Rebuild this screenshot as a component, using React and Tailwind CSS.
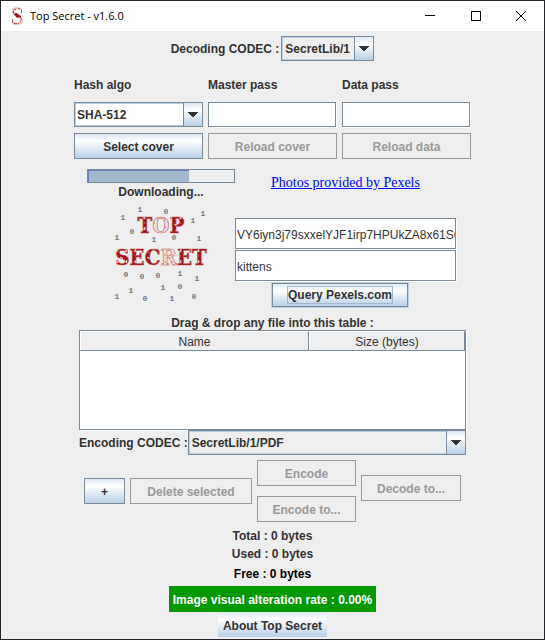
import React from 'react';

const metal = 'border border-[#7a8a99] bg-linear-to-b from-[#dde8f3] via-white via-30% to-[#b8cfe5]';

function Combo({ id, value, className, white }) {
  return (
    <div className={`relative h-[25px] border border-[#7a8a99] ${className}`}>
      <select
        id={id}
        defaultValue={value}
        className={`block h-full w-full appearance-none border border-[#b8cfe5] pr-5 font-bold text-[#333333] outline-none ${
          white ? 'bg-white pl-px' : 'bg-[#eeeeee] pl-0.5'
        }`}
      >
        <option>{value}</option>
      </select>
      <span className="pointer-events-none absolute inset-y-0 right-0 flex w-[19px] items-center justify-center border-l border-[#7a8a99] bg-linear-to-b from-[#dde8f3] via-white via-30% to-[#b8cfe5]">
        <svg width="10" height="5" viewBox="0 0 10 5" fill="#333333" shapeRendering="crispEdges" aria-hidden="true">
          <path d="M0 0h10v1H9v1H8v1H7v1H6v1H4V4H3V3H2V2H1V1H0z" />
        </svg>
      </span>
    </div>
  );
}

function Button({ children, disabled, className = '' }) {
  return (
    <button
      type="button"
      disabled={disabled}
      className={`h-[26px] pt-0.5 font-bold whitespace-nowrap ${
        disabled ? 'border border-[#999999] bg-[#eeeeee] text-[#999999]' : `${metal} text-[#333333]`
      } ${className}`}
    >
      {children}
    </button>
  );
}

const field =
  'block w-full border border-[#7a8a99] bg-white pl-px pt-0.5 text-[#333333] outline-none shadow-[1px_1px_0_#ffffff]';

const digits = [
  ['1', 22, 18], ['1', 39, 10], ['0', 65, 12], ['1', 102, 14], ['1', 92, 21], ['0', 31, 32],
  ['1', 16, 38], ['1', 53, 40], ['0', 73, 38], ['1', 98, 39], ['0', 25, 75], ['0', 41, 77],
  ['0', 57, 76], ['1', 79, 74], ['1', 96, 79], ['1', 30, 91], ['1', 62, 88], ['0', 79, 87],
  ['1', 16, 97], ['0', 44, 99], ['1', 71, 99], ['0', 93, 97],
];

function Logo() {
  return (
    <svg width="120" height="104" viewBox="0 0 120 104" role="img" aria-label="Top Secret">
      <defs>
        <pattern id="worn" width="9" height="11" patternUnits="userSpaceOnUse">
          <rect width="9" height="11" fill="#a31515" />
          <path d="M1 2l3 1-1 1zM6 7l2-2v3zM2 8l1 1M7 1h1" stroke="#e6c4c4" strokeWidth=".7" fill="#eeeeee" />
        </pattern>
        <pattern id="hollow" width="7" height="7" patternUnits="userSpaceOnUse">
          <rect width="7" height="7" fill="#eedcdc" />
          <path d="M0 5l2 2M3 1l2 2" stroke="#c66060" strokeWidth=".7" />
        </pattern>
      </defs>
      <g fontFamily="'DejaVu Serif Condensed', 'Liberation Serif', serif" fontWeight="700" fontSize="22" textAnchor="middle" fill="url(#worn)" stroke="#b94444" strokeWidth=".5">
        <text x="60" y="33">T<tspan fill="url(#hollow)">O</tspan>P</text>
        <text x="60" y="65">SEC<tspan fill="url(#hollow)">R</tspan>ET</text>
      </g>
      <g fontFamily="'Liberation Mono', monospace" fontWeight="700" fontSize="8" textAnchor="middle" fill="#777777">
        {digits.map(([d, x, y], i) => (
          <text key={i} x={x} y={y + 2}>{d}</text>
        ))}
      </g>
    </svg>
  );
}

export default function App() {
  return (
    <div className="flex min-h-screen flex-col border border-[#25232b] bg-[#eeeeee] font-['Liberation_Sans',Arial,sans-serif] text-xs leading-4 font-bold text-[#333333]">
      <header className="flex h-[30px] items-center bg-white pl-2 text-black">
        <svg width="16" height="18" viewBox="0 0 16 18" fill="none" aria-hidden="true">
          <path d="M11.500 2.500C9 .5 4 1 4 4.500c0 3 3 3.500 5 5 2 1 3.500 2 3.500 4 0 3.500-5 4-8.500 2.500" stroke="#e8c0c0" strokeWidth="2.500" />
          <path d="M5 2h2M9 1h2M12 2v4M4 4v3M6 6h1M3 12v4M5 16h3M11 14h1M12 11v2M9 16h1" stroke="#bd5555" strokeWidth="1" shapeRendering="crispEdges" />
          <path d="M5 7l3-1 2 2 2 1v2l-2-1-2 1z" fill="#9a1010" />
        </svg>
        <h1 className="ml-[5px] flex-1 font-['Open_Sans',sans-serif] text-[11px] font-normal">Top Secret - v1.6.0</h1>
        <button type="button" aria-label="Minimize" className="flex h-full w-[46px] items-center justify-center">
          <svg width="10" height="10" stroke="#000000" shapeRendering="crispEdges"><path d="M0 4.500h10" /></svg>
        </button>
        <button type="button" aria-label="Maximize" className="flex h-full w-[45px] items-center justify-center">
          <svg width="10" height="10" fill="none" stroke="#000000" shapeRendering="crispEdges"><path d="M.5.5h9v9h-9z" /></svg>
        </button>
        <button type="button" aria-label="Close" className="flex h-full w-[46px] items-center justify-center">
          <svg width="10" height="10" stroke="#000000"><path d="M0 0l10 10M10 0L0 10" /></svg>
        </button>
      </header>

      <main className="flex flex-col items-center">
        <div className="mt-[5px] flex items-center gap-0.5">
          <label htmlFor="decoding">Decoding CODEC :</label>
          <Combo id="decoding" value="SecretLib/1" className="w-[93px]" />
        </div>

        <div className="mt-4 grid w-[397px] max-w-full grid-cols-3 gap-x-[5px] gap-y-1.5">
          <label htmlFor="hash" className="mb-[3px]">Hash algo</label>
          <label htmlFor="master">Master pass</label>
          <label htmlFor="data">Data pass</label>
          <Combo id="hash" value="SHA-512" white className="w-full" />
          <div className="pr-px"><input id="master" type="password" className={`${field} h-[25px]`} /></div>
          <div className="pr-px"><input id="data" type="password" className={`${field} h-[25px]`} /></div>
          <Button>Select cover</Button>
          <Button disabled>Reload cover</Button>
          <Button disabled>Reload data</Button>
        </div>

        <div className="mt-2.5 flex w-[371px] max-w-full">
          <div className="flex w-[148px] flex-col items-center">
            <div role="progressbar" aria-label="Downloading" aria-valuenow="69" className="h-3.5 w-full border border-[#7a8a99]">
              <div className="h-full w-[69%] border-t border-l border-[#6382bf] bg-[#a3b8cc]" />
            </div>
            <p className="mt-px">Downloading...</p>
            <Logo />
          </div>
          <div className="flex-1 pt-1">
            <a href="#pexels" className="ml-9 block w-fit font-['Liberation_Serif',serif] text-sm leading-5 font-normal text-[#0000ff] underline">
              Photos provided by Pexels
            </a>
            <div className="mt-[25px] flex flex-col gap-px pr-0.5">
              <input aria-label="Pexels API key" defaultValue="VY6iyn3j79sxxelYJF1irp7HPUkZA8x61SG" className={`${field} h-[31px] font-normal`} />
              <input aria-label="Search query" defaultValue="kittens" className={`${field} h-[31px] font-normal`} />
            </div>
            <button type="button" className={`${metal} mt-0.5 ml-[37px] block h-6 w-[136px] p-0 font-bold shadow-[0_0_0_1px_#b8cfe5]`}>
              <span className="inline-block border border-[#a3b8cc] leading-4">Query Pexels.com</span>
            </button>
          </div>
        </div>

        <div className="mt-2 w-[387px] max-w-full">
          <p className="pt-px text-center leading-[14px]">Drag &amp; drop any file into this table :</p>
          <div className="h-[100px] border border-[#7a8a99] bg-white shadow-[1px_1px_0_#ffffff]">
            <table className="w-full table-fixed border-separate border-spacing-0">
              <thead>
                <tr className="h-5">
                  <th scope="col" className="w-[229px] border-t border-r border-b border-l border-t-white border-r-[#7a8a99] border-b-[#7a8a99] border-l-white bg-[#eeeeee] p-0 pt-px font-normal">Name</th>
                  <th scope="col" className="border-t border-r border-b border-l border-t-white border-r-[#7a8a99] border-b-[#7a8a99] border-l-white bg-[#eeeeee] p-0 pt-px font-normal">Size (bytes)</th>
                </tr>
              </thead>
            </table>
          </div>
          <div className="flex items-center">
            <label htmlFor="encoding" className="whitespace-nowrap">Encoding CODEC :</label>
            <Combo id="encoding" value="SecretLib/1/PDF" className="flex-1" />
          </div>
        </div>

        <div className="mt-[5px] flex items-center gap-[5px]">
          <Button className="w-[41px]">+</Button>
          <Button disabled className="w-[122px]">Delete selected</Button>
          <div className="flex w-[99px] flex-col gap-2.5">
            <Button disabled>Encode</Button>
            <Button disabled>Encode to...</Button>
          </div>
          <Button disabled className="mb-1.5 w-[100px]">Decode to...</Button>
        </div>

        <p className="mt-1.5">Total : 0 bytes</p>
        <p className="mt-0.5">Used : 0 bytes</p>
        <p className="mt-1 text-black">Free : 0 bytes</p>
        <p className="mt-1 bg-[#009900] px-1 pt-1.5 pb-1 text-white">Image visual alteration rate : 0.00%</p>
        <button type="button" className="h-[25px] bg-linear-to-b from-[#dde8f3] via-white via-30% to-[#b8cfe5] px-[5px] pt-0.5 font-bold">
          About Top Secret
        </button>
      </main>
    </div>
  );
}
